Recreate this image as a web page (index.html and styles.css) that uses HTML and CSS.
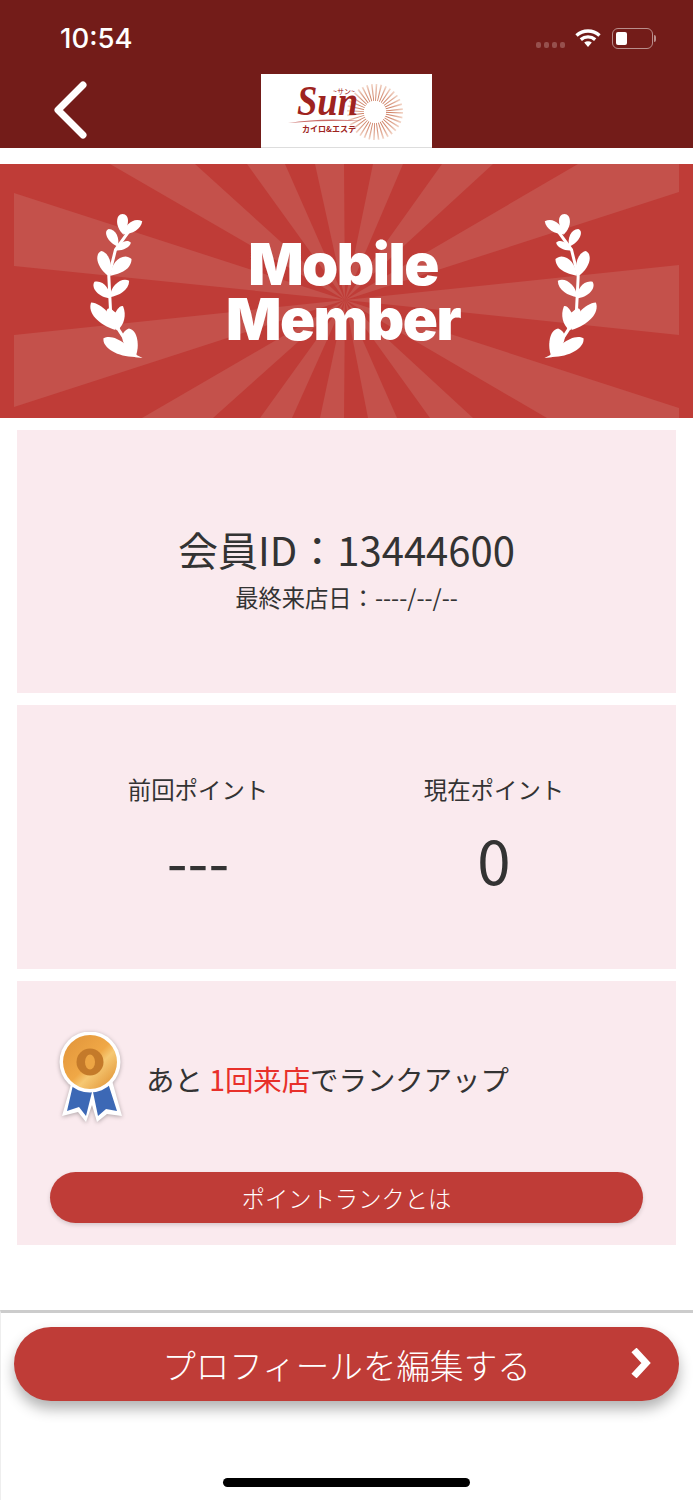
FILE: index.html
```html
<!DOCTYPE html>
<html lang="ja">
<head>
    <meta charset="UTF-8">
    <meta name="viewport" content="width=device-width, initial-scale=1.0">
    <title>Mobile Member</title>
    <link rel="stylesheet" href="styles.css">
</head>
<body>
    <svg class="defs" width="0" height="0">
        <symbol id="laurel" viewBox="260 160 170 440">
            <path fill="none" stroke="#fff" stroke-width="9" d="M405 588 L355 510 L330 450 L325 350 L345 270 L385 215"/>
            <path d="M368 224C342 200 346 163 366 163C388 164 387 195 368 224Z"/>
            <path d="M368 224C372 195 400 172 425 185C422 208 395 224 368 224Z"/>
            <path d="M352 260C322 250 306 214 325 208C347 210 358 235 352 260Z"/>
            <path d="M345 272C352 250 380 236 391 249C387 264 365 274 345 272Z"/>
            <path d="M325 350C290 325 280 285 302 274C325 278 340 315 325 350Z"/>
            <path d="M330 348C330 305 370 275 393 298C392 330 360 342 330 348Z"/>
            <path d="M328 416C295 412 270 385 282 366C310 360 330 390 328 416Z"/>
            <path d="M328 412C330 375 365 350 386 363C385 392 355 408 328 412Z"/>
            <path d="M345 510C295 495 260 460 272 428C305 430 340 470 345 510Z"/>
            <path d="M350 512C310 480 312 440 330 446L345 458C352 445 362 435 368 440C378 465 372 495 350 512Z"/>
            <path d="M405 591C355 592 305 565 309 535C340 518 392 560 405 591Z"/>
            <path d="M405 590C365 562 350 520 385 506C412 510 418 560 405 590Z"/>
            <path d="M402 582L426 594L404 592Z"/>
        </symbol>
    </svg>

    <header class="topbar">
        <div class="status">
            <span class="time">10:54</span>
            <div class="status-icons">
                <span class="signal"><i></i><i></i><i></i><i></i></span>
                <svg class="wifi" width="26" height="20" viewBox="0 0 26 20">
                    <path fill="none" stroke="#fff" stroke-width="3.4" d="M1.5 7.5C8 1.5 18 1.5 24.5 7.5M5.8 11.6C10 8 16 8 20.2 11.6"/>
                    <path fill="#fff" d="M9.2 14.6C11.5 12.9 14.5 12.9 16.8 14.6L13 19Z"/>
                </svg>
                <div class="battery"><div class="battery-level"></div></div>
                <span class="battery-cap"></span>
            </div>
        </div>
        <div class="nav">
            <svg class="back" width="36" height="58" viewBox="0 0 36 58">
                <path fill="none" stroke="#fff" stroke-width="7" stroke-linecap="round" stroke-linejoin="round" d="M30 4L5 29L30 54"/>
            </svg>
            <div class="logo">
                <svg width="171" height="74" viewBox="0 0 171 74">
                    <defs>
                        <radialGradient id="rayFade" gradientUnits="userSpaceOnUse" cx="114" cy="38" r="28">
                            <stop offset=".4" stop-color="#c4694a"/>
                            <stop offset="1" stop-color="#f3d6c8"/>
                        </radialGradient>
                    </defs>
                    <circle class="sun-rays" cx="114" cy="38" r="19.5" stroke="url(#rayFade)"/>
                    <circle cx="114" cy="38" r="11" fill="#fff"/>
                    <path d="M27 49Q64 43 102 47Q64 46 27 49Z" fill="#c96a66"/>
                    <text class="logo-name" x="36" y="41" textLength="61" lengthAdjust="spacingAndGlyphs">Sun</text>
                    <text class="logo-small" x="72" y="20">~サン~</text>
                    <text class="logo-sub" x="41" y="58">カイロ&amp;エステ</text>
                </svg>
            </div>
        </div>
    </header>

    <section class="banner">
        <svg class="rays" viewBox="0 0 693 254" width="693" height="254">
            <g fill="#c4514b">
                <polygon points="14,29 345,136 14,102"/>
                <polygon points="14,171 345,136 14,243"/>
                <polygon points="110,0 195,0 345,136"/>
                <polygon points="247,0 285,0 345,136"/>
                <polygon points="315,0 344,0 345,136"/>
                <polygon points="373,0 403,0 345,136"/>
                <polygon points="442,0 493,0 345,136"/>
                <polygon points="578,0 679,0 679,28 345,136"/>
                <polygon points="679,101 679,171 345,136"/>
                <polygon points="679,244 679,254 547,254 345,136"/>
                <polygon points="473,254 430,254 345,136"/>
                <polygon points="397,254 368,254 345,136"/>
                <polygon points="344,254 320,254 345,136"/>
                <polygon points="292,254 260,254 345,136"/>
                <polygon points="213,254 142,254 345,136"/>
            </g>
        </svg>
        <svg class="laurel laurel-left" width="57" height="147"><use href="#laurel"/></svg>
        <h1 class="banner-title">Mobile<br>Member</h1>
        <svg class="laurel laurel-right" width="57" height="147"><use href="#laurel"/></svg>
    </section>

    <main class="cards">
        <div class="card card-id">
            <div class="member-id">会員ID：13444600</div>
            <div class="last-visit">最終来店日：----/--/--</div>
        </div>
        <div class="card card-points">
            <div class="point-col">
                <div class="point-label">前回ポイント</div>
                <div class="point-value">---</div>
            </div>
            <div class="point-col">
                <div class="point-label">現在ポイント</div>
                <div class="point-value">0</div>
            </div>
        </div>
        <div class="card card-rank">
            <div class="rank-row">
                <svg class="medal" width="66" height="92" viewBox="0 0 66 92">
                    <defs>
                        <linearGradient id="gold" x1="0" y1="0" x2="1" y2="1">
                            <stop offset="0" stop-color="#e0933a"/>
                            <stop offset=".5" stop-color="#f0a846"/>
                            <stop offset=".62" stop-color="#f6c873"/>
                            <stop offset="1" stop-color="#dd8a2a"/>
                        </linearGradient>
                    </defs>
                    <path fill="#fff" d="M15 45L4 84L20 80L28 90L34 73L39 90L49 82L64 84L53 45Z"/>
                    <path fill="#3c68b5" d="M15 53L9 79L21 75L28 84L34 60Z"/>
                    <path fill="#3c68b5" d="M50 51L59 79L48 77L40 84L35 60Z"/>
                    <circle cx="32" cy="30" r="30.5" fill="#fff"/>
                    <circle cx="32" cy="30" r="27" fill="url(#gold)"/>
                    <circle cx="32" cy="30" r="13.5" fill="#c47a2a"/>
                    <ellipse cx="32" cy="30" rx="5" ry="7.5" fill="#eda544"/>
                </svg>
                <p class="rank-text">あと <em>1回来店</em>でランクアップ</p>
            </div>
            <a class="rank-btn">ポイントランクとは</a>
        </div>
    </main>

    <footer class="bottom">
        <a class="edit-btn">
            プロフィールを編集する
            <svg class="chevron" width="22" height="30" viewBox="0 0 22 30">
                <path fill="none" stroke="#fff" stroke-width="7" stroke-linejoin="miter" d="M4 2L16 15L4 28"/>
            </svg>
        </a>
        <div class="home-bar"></div>
    </footer>
</body>
</html>
```
FILE: styles.css
```css
* {
    box-sizing: border-box;
}
html, body {
    margin: 0;
    padding: 0;
}
body {
    width: 693px;
    height: 1500px;
    overflow: hidden;
    background: #fff;
    color: #333;
    font-family: "Noto Sans CJK JP", "Noto Sans", sans-serif;
}
.defs {
    display: block;
}

/* header */
.topbar {
    height: 148px;
    background: #731c19;
    display: flex;
    flex-direction: column;
}
.status {
    height: 74px;
    padding: 20px 37px 0 60px;
    display: flex;
    justify-content: space-between;
    align-items: flex-start;
}
.time {
    color: #fff;
    font-family: Inter, "Liberation Sans", sans-serif;
    font-size: 27.5px;
    font-weight: 500;
    line-height: 36px;
}
.status-icons {
    display: flex;
    align-items: center;
    height: 36px;
}
.signal {
    display: flex;
    gap: 2.5px;
    margin-top: 14px;
    margin-right: 10px;
}
.signal i {
    width: 5.5px;
    height: 6px;
    border-radius: 2px;
    background: #96504d;
}
.wifi {
    margin-right: 11px;
}
.battery {
    width: 41px;
    height: 21px;
    border: 1.5px solid #b98e8c;
    border-radius: 6px;
    padding: 3px;
}
.battery-level {
    width: 11px;
    height: 100%;
    background: #fff;
    border-radius: 2px;
}
.battery-cap {
    width: 2px;
    height: 7px;
    margin-left: 1px;
    background: #b98e8c;
    border-radius: 0 2px 2px 0;
}
.nav {
    height: 74px;
    position: relative;
    display: flex;
    justify-content: center;
}
.back {
    position: absolute;
    left: 53px;
    top: 7px;
}
.logo {
    width: 171px;
    height: 74px;
    background: #fff;
    border-bottom: 1px solid #ddd;
}
.logo svg {
    display: block;
}
.sun-rays {
    fill: none;
    stroke-width: 17;
    stroke-dasharray: 1.2 2.2;
}
.logo-name {
    font-family: "Liberation Serif", serif;
    font-style: italic;
    font-weight: bold;
    font-size: 42px;
    fill: #9e2320;
}
.logo-small {
    font-size: 7px;
    fill: #9e2320;
}
.logo-sub {
    font-size: 8px;
    font-weight: bold;
    fill: #9e2320;
}

/* banner */
.banner {
    position: relative;
    height: 254px;
    margin-top: 16px;
    background: #bf3c37;
    display: flex;
    align-items: center;
    justify-content: center;
}
.rays {
    position: absolute;
    left: 0;
    top: 0;
}
.laurel {
    position: absolute;
    top: 49px;
    fill: #fff;
}
.laurel-left {
    left: 87px;
}
.laurel-right {
    left: 543px;
    transform: scaleX(-1);
}
.banner-title {
    position: relative;
    margin: 0 0 -1px -7px;
    color: #fff;
    font-family: Inter, "Liberation Sans", sans-serif;
    font-size: 58px;
    font-weight: 900;
    line-height: 55px;
    letter-spacing: -1.5px;
    text-align: center;
}

/* cards */
.cards {
    margin-top: 12px;
    padding: 0 17px;
    display: flex;
    flex-direction: column;
    gap: 12px;
}
.card {
    height: 264px;
    background: #faeaee;
}
.card-id {
    height: 263px;
    padding-top: 89px;
    text-align: center;
}
.member-id {
    font-size: 40px;
    line-height: 60px;
}
.last-visit {
    font-size: 23.3px;
    line-height: 34px;
    margin-top: 1px;
}
.card-points {
    padding: 66px 34px 0 33px;
    display: grid;
    grid-template-columns: 1fr 1fr;
}
.point-col {
    text-align: center;
}
.point-label {
    font-size: 23.4px;
    line-height: 36px;
}
.point-value {
    font-size: 60px;
    line-height: 76px;
    margin-top: 14px;
}
.card-rank {
    padding: 51px 33px 0;
}
.rank-row {
    height: 90px;
    display: flex;
    align-items: flex-start;
    padding-left: 8px;
}
.medal {
    flex: none;
    margin-right: 24px;
    filter: drop-shadow(0 1px 2px rgba(0, 0, 0, .3));
}
.rank-text {
    margin: 0;
    font-size: 28.4px;
    line-height: 40px;
    margin-top: 27px;
    margin-left: -2px;
}
.rank-text em {
    font-style: normal;
    color: #e8302a;
}
.rank-btn {
    display: flex;
    align-items: center;
    justify-content: center;
    height: 51px;
    margin-top: 50px;
    border-radius: 26px;
    background: #bf3c37;
    color: #fff;
    font-size: 23.3px;
    font-weight: 300;
    box-shadow: 0 2px 4px rgba(0, 0, 0, .15);
}

/* footer */
.bottom {
    position: absolute;
    left: 0;
    top: 1310px;
    width: 693px;
    height: 190px;
    border-top: 3px solid #ccc;
    border-left: 1px solid #eee;
    padding: 14px 14px 0 13px;
}
.edit-btn {
    position: relative;
    display: flex;
    align-items: center;
    justify-content: center;
    height: 74px;
    border-radius: 37px;
    background: #bf3c37;
    color: #fff;
    font-size: 33.6px;
    font-weight: 300;
    box-shadow: 0 8px 14px rgba(0, 0, 0, .3);
}
.chevron {
    position: absolute;
    right: 27px;
    top: 21px;
}
.home-bar {
    width: 247px;
    height: 9px;
    margin: 77px auto 0;
    border-radius: 5px;
    background: #000;
}
```
